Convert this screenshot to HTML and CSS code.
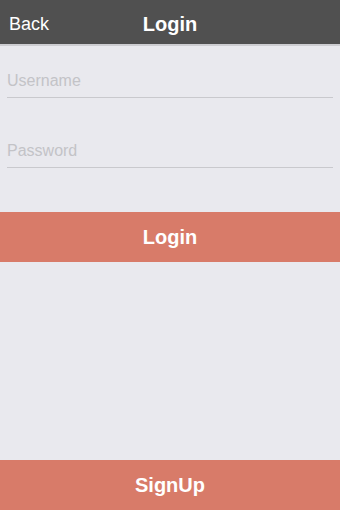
FILE: index.html
```html
<!DOCTYPE html>
<html lang="en">
<head>
<meta charset="utf-8">
<title>Login</title>
<link rel="stylesheet" href="styles.css">
</head>
<body>
<div class="app">
  <header class="navbar">
    <span class="nav-back">Back</span>
    <span class="nav-title">Login</span>
  </header>
  <main class="content">
    <form class="login-form">
      <input class="field field-user" type="text" placeholder="Username">
      <input class="field field-pass" type="password" placeholder="Password">
      <button class="btn btn-login" type="button">Login</button>
    </form>
  </main>
  <button class="btn btn-signup" type="button">SignUp</button>
</div>
</body>
</html>
```

FILE: styles.css
```css
html, body {
  margin: 0;
  padding: 0;
}

body {
  background: #e9e9ee;
  font-family: "Liberation Sans", Arial, sans-serif;
}

.app {
  display: flex;
  flex-direction: column;
  width: 340px;
  height: 510px;
  overflow: hidden;
}

.navbar {
  position: relative;
  display: flex;
  align-items: center;
  height: 40px;
  padding-top: 4px;
  background: #505050;
  border-bottom: 2px solid #cdcdd1;
  color: #ffffff;
  flex: none;
}

.nav-back {
  margin-left: 9px;
  font-size: 18px;
}

.nav-title {
  position: absolute;
  left: 0;
  right: 0;
  top: 4px;
  bottom: 0;
  display: flex;
  align-items: center;
  justify-content: center;
  font-size: 20px;
  font-weight: bold;
  pointer-events: none;
}

.content {
  flex: 1;
}

.login-form {
  display: flex;
  flex-direction: column;
  margin: 0;
}

.field {
  display: block;
  box-sizing: content-box;
  width: 326px;
  height: 20px;
  margin: 0 0 0 7px;
  padding: 4px 0 6px;
  border: none;
  border-bottom: 1px solid #c9c9cd;
  background: transparent;
  font-family: "Liberation Sans", Arial, sans-serif;
  font-size: 16px;
  line-height: 20px;
  color: #333333;
  outline: none;
}

.field::placeholder {
  color: #c3c3c7;
}

.field-user {
  margin-top: 21px;
}

.field-pass {
  margin-top: 39px;
}

.btn {
  display: flex;
  align-items: center;
  justify-content: center;
  width: 340px;
  height: 50px;
  padding: 0;
  border: none;
  background: #d87b69;
  color: #ffffff;
  font-family: "Liberation Sans", Arial, sans-serif;
  font-size: 20px;
  font-weight: bold;
  flex: none;
}

.btn-login {
  margin-top: 44px;
}
```
